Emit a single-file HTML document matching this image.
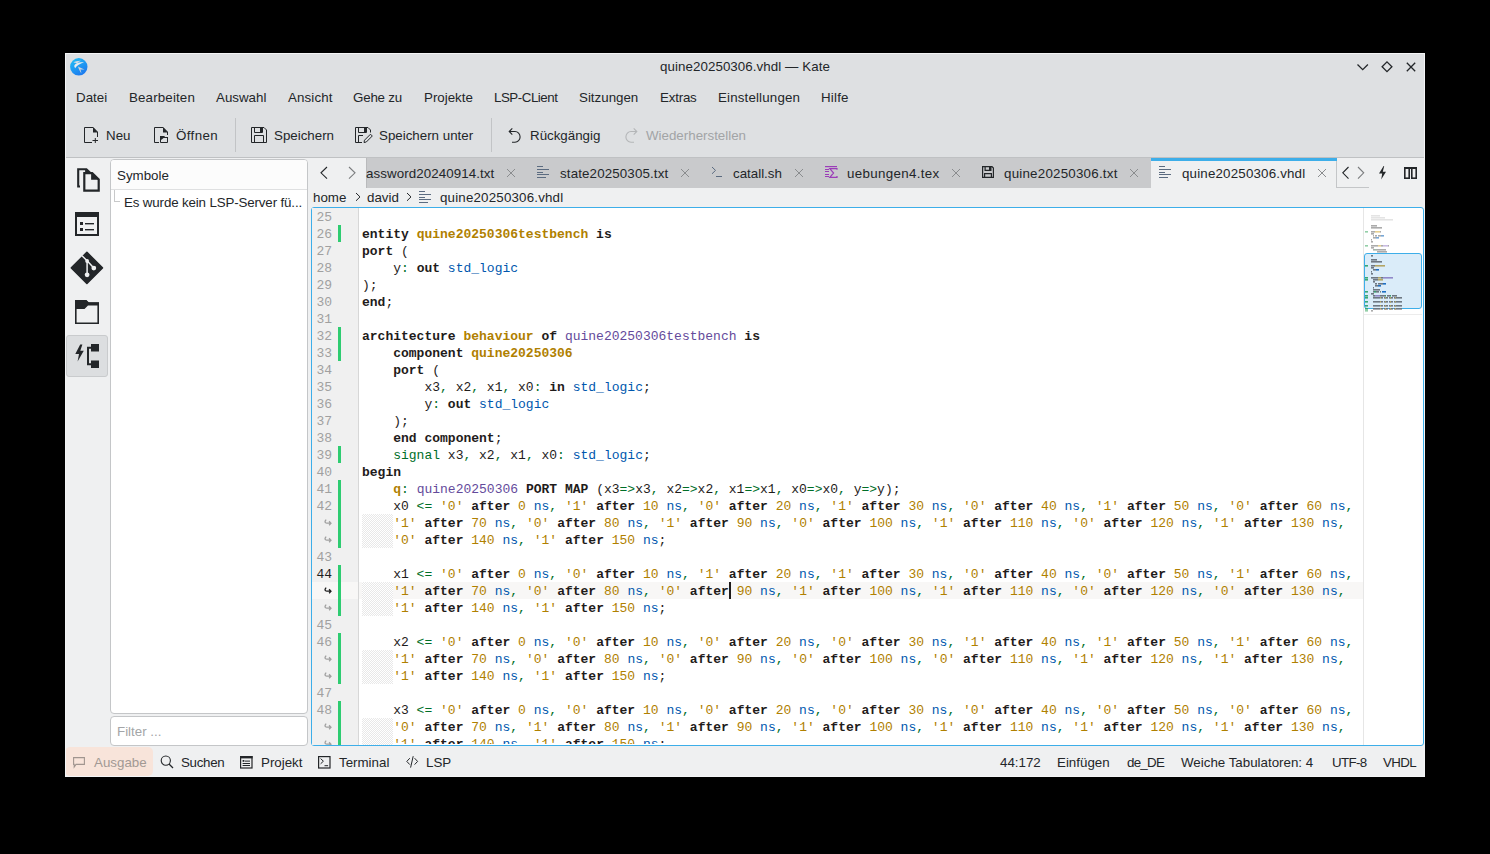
<!DOCTYPE html><html><head><meta charset="utf-8"><title>Kate</title><style>
html,body{margin:0;padding:0;background:#000;width:1490px;height:854px;overflow:hidden}
.r{position:absolute}
.t{position:absolute;font-family:'Liberation Sans', sans-serif;font-size:13.333px;line-height:16px;white-space:pre}
.code{position:absolute;left:362px;top:208px;width:1001px;height:536px;overflow:hidden;font-family:'Liberation Mono', monospace;font-size:13px;line-height:17px;color:#1f1c1b}
.row{height:17px;white-space:pre;position:relative}
.row span{position:relative;top:1px}
.k{font-weight:bold}
.ln{position:absolute;left:300px;width:32px;text-align:right;font-family:'Liberation Mono', monospace;font-size:13px;line-height:17px;padding-top:1px}
.hatch{background-color:#fff;background-image:repeating-conic-gradient(#e8e8e8 0 25%,#fff 0 50%);background-size:2px 2px}
.g{color:#b08000}
.gb{color:#b08000;font-weight:bold}
.b{color:#0057ae}
.o{color:#006e28}
.p{color:#644a9b}
svg{position:absolute;overflow:visible}
</style></head><body>
<div class="r" style="left:65px;top:53px;width:1360px;height:724px;background:#eff0f1;"></div>
<div class="r" style="left:65px;top:53px;width:1360px;height:104px;background:#dee0e2;"></div>
<div class="r" style="left:65px;top:157px;width:1360px;height:1px;background:#bfc1c3;"></div>
<div class="t" style="left:660px;top:59px;color:#232629;letter-spacing:0.07px;">quine20250306.vhdl — Kate</div>
<div class="t" style="left:76px;top:90px;color:#232629;">Datei</div>
<div class="t" style="left:129px;top:90px;color:#232629;letter-spacing:0.15px;">Bearbeiten</div>
<div class="t" style="left:216px;top:90px;color:#232629;">Auswahl</div>
<div class="t" style="left:288px;top:90px;color:#232629;letter-spacing:0.12px;">Ansicht</div>
<div class="t" style="left:353px;top:90px;color:#232629;letter-spacing:-0.2px;">Gehe zu</div>
<div class="t" style="left:424px;top:90px;color:#232629;">Projekte</div>
<div class="t" style="left:494px;top:90px;color:#232629;letter-spacing:-0.47px;">LSP-CLient</div>
<div class="t" style="left:579px;top:90px;color:#232629;">Sitzungen</div>
<div class="t" style="left:660px;top:90px;color:#232629;letter-spacing:-0.2px;">Extras</div>
<div class="t" style="left:718px;top:90px;color:#232629;letter-spacing:0.16px;">Einstellungen</div>
<div class="t" style="left:821px;top:90px;color:#232629;letter-spacing:0.2px;">Hilfe</div>
<div class="t" style="left:106px;top:128px;color:#232629;">Neu</div>
<div class="t" style="left:176px;top:128px;color:#232629;letter-spacing:0.38px;">Öffnen</div>
<div class="t" style="left:274px;top:128px;color:#232629;">Speichern</div>
<div class="t" style="left:379px;top:128px;color:#232629;">Speichern unter</div>
<div class="t" style="left:530px;top:128px;color:#232629;">Rückgängig</div>
<div class="t" style="left:646px;top:128px;color:#a2a4a6;">Wiederherstellen</div>
<div class="r" style="left:235px;top:118px;width:1px;height:34px;background:#c2c4c6;"></div>
<div class="r" style="left:491px;top:118px;width:1px;height:34px;background:#c2c4c6;"></div>
<div class="r" style="left:66px;top:335px;width:42px;height:42px;background:#dcdee0;border:1px solid #c9cbcd;border-radius:3px;box-sizing:border-box"></div>
<div class="r" style="left:110px;top:159px;width:198px;height:555px;background:#fff;border:1px solid #c4c6c8;border-radius:4px;box-sizing:border-box;overflow:hidden"><div style="position:absolute;left:0;top:0;width:196px;height:29px;background:#fcfcfc;border-bottom:1px solid #dfe0e1"></div></div>
<div class="t" style="left:117px;top:168px;color:#232629;">Symbole</div>
<div class="r" style="left:114px;top:190px;width:1px;height:12px;background:#c8c9ca;"></div>
<div class="r" style="left:114px;top:201px;width:6px;height:1px;background:#c8c9ca;"></div>
<div class="t" style="left:124px;top:195px;color:#232629;letter-spacing:-0.14px;">Es wurde kein LSP-Server fü...</div>
<div class="r" style="left:110px;top:716px;width:198px;height:30px;background:#fff;border:1px solid #c4c6c8;border-radius:4px;box-sizing:border-box"></div>
<div class="t" style="left:117px;top:724px;color:#a3a5a7;">Filter ...</div>
<div class="r" style="left:366px;top:158px;width:785px;height:30px;background:#c9cacc;"></div>
<div class="r" style="left:366px;top:158px;width:1px;height:30px;background:#b9babc;"></div>
<div class="r" style="left:1151px;top:158px;width:186px;height:30px;background:#eff0f1;"></div>
<div class="r" style="left:1151px;top:158px;width:186px;height:3px;background:#3daee9;"></div>
<div class="r" style="left:1336px;top:161px;width:1px;height:27px;background:#c4c6c8;"></div>
<div class="r" style="left:1337px;top:187px;width:32px;height:1px;background:#c4c6c8;"></div>
<div class="t" style="left:366px;top:166px;color:#232629;letter-spacing:0.08px;">assword20240914.txt</div>
<div class="t" style="left:560px;top:166px;color:#232629;letter-spacing:0.14px;">state20250305.txt</div>
<div class="t" style="left:733px;top:166px;color:#232629;">catall.sh</div>
<div class="t" style="left:847px;top:166px;color:#232629;letter-spacing:0.33px;">uebungen4.tex</div>
<div class="t" style="left:1004px;top:166px;color:#232629;letter-spacing:0.23px;">quine20250306.txt</div>
<div class="t" style="left:1182px;top:166px;color:#232629;letter-spacing:0.18px;">quine20250306.vhdl</div>
<div class="t" style="left:313px;top:190px;color:#232629;">home</div>
<div class="t" style="left:367px;top:190px;color:#232629;">david</div>
<div class="t" style="left:440px;top:190px;color:#232629;letter-spacing:0.18px;">quine20250306.vhdl</div>
<div class="r" style="left:311px;top:207px;width:1113px;height:539px;background:#fff;border:1px solid #3daee9;border-radius:3px;box-sizing:border-box;overflow:hidden"></div>
<div class="r" style="left:312px;top:208px;width:46px;height:537px;background:#f0f0f0;"></div>
<div class="r" style="left:358px;top:208px;width:1px;height:537px;background:#d7d7d7;"></div>
<div class="r" style="left:1363px;top:208px;width:1px;height:537px;background:#e6e6e6;"></div>
<div style="position:absolute;left:0;top:0;width:1490px;height:854px;clip-path:inset(208px 127px 109px 312px round 2px 0 0 2px)">
<div class="ln" style="top:208px;color:#a0a0a0">25</div>
<div class="r" style="left:338px;top:225px;width:3px;height:17px;background:#2ecc71;"></div>
<div class="ln" style="top:225px;color:#a0a0a0">26</div>
<div class="ln" style="top:242px;color:#a0a0a0">27</div>
<div class="ln" style="top:259px;color:#a0a0a0">28</div>
<div class="ln" style="top:276px;color:#a0a0a0">29</div>
<div class="ln" style="top:293px;color:#a0a0a0">30</div>
<div class="ln" style="top:310px;color:#a0a0a0">31</div>
<div class="r" style="left:338px;top:327px;width:3px;height:17px;background:#2ecc71;"></div>
<div class="ln" style="top:327px;color:#a0a0a0">32</div>
<div class="r" style="left:338px;top:344px;width:3px;height:17px;background:#2ecc71;"></div>
<div class="ln" style="top:344px;color:#a0a0a0">33</div>
<div class="ln" style="top:361px;color:#a0a0a0">34</div>
<div class="ln" style="top:378px;color:#a0a0a0">35</div>
<div class="ln" style="top:395px;color:#a0a0a0">36</div>
<div class="ln" style="top:412px;color:#a0a0a0">37</div>
<div class="ln" style="top:429px;color:#a0a0a0">38</div>
<div class="r" style="left:338px;top:446px;width:3px;height:17px;background:#2ecc71;"></div>
<div class="ln" style="top:446px;color:#a0a0a0">39</div>
<div class="ln" style="top:463px;color:#a0a0a0">40</div>
<div class="r" style="left:338px;top:480px;width:3px;height:17px;background:#2ecc71;"></div>
<div class="ln" style="top:480px;color:#a0a0a0">41</div>
<div class="r" style="left:338px;top:497px;width:3px;height:17px;background:#2ecc71;"></div>
<div class="ln" style="top:497px;color:#a0a0a0">42</div>
<div class="r hatch" style="left:362px;top:514px;width:31px;height:17px;background-position:0 -514px"></div>
<div class="r" style="left:338px;top:514px;width:3px;height:17px;background:#2ecc71;"></div>
<svg style="left:324px;top:519px" width="8" height="8" viewBox="0 0 8 8"><path d="M2.2 0.6 Q0.4 2.4 1.4 3.6 Q1.9 4.2 3 4.2 H6.8 M5.1 2.2 L7 4.2 L5.1 6.2" fill="none" stroke="#a0a0a0" stroke-width="1.25"/></svg>
<div class="r hatch" style="left:362px;top:531px;width:31px;height:17px;background-position:0 -531px"></div>
<div class="r" style="left:338px;top:531px;width:3px;height:17px;background:#2ecc71;"></div>
<svg style="left:324px;top:536px" width="8" height="8" viewBox="0 0 8 8"><path d="M2.2 0.6 Q0.4 2.4 1.4 3.6 Q1.9 4.2 3 4.2 H6.8 M5.1 2.2 L7 4.2 L5.1 6.2" fill="none" stroke="#a0a0a0" stroke-width="1.25"/></svg>
<div class="ln" style="top:548px;color:#a0a0a0">43</div>
<div class="r" style="left:338px;top:565px;width:3px;height:17px;background:#2ecc71;"></div>
<div class="ln" style="top:565px;color:#1e1e1e">44</div>
<div class="r" style="left:312px;top:582px;width:46px;height:17px;background:#f8f7f6;"></div>
<div class="r" style="left:359px;top:582px;width:1004px;height:17px;background:#f8f7f6;"></div>
<div class="r hatch" style="left:362px;top:582px;width:31px;height:17px;background-position:0 -582px"></div>
<div class="r" style="left:338px;top:582px;width:3px;height:17px;background:#2ecc71;"></div>
<svg style="left:324px;top:587px" width="8" height="8" viewBox="0 0 8 8"><path d="M2.2 0.6 Q0.4 2.4 1.4 3.6 Q1.9 4.2 3 4.2 H6.8 M5.1 2.2 L7 4.2 L5.1 6.2" fill="none" stroke="#1e1e1e" stroke-width="1.25"/></svg>
<div class="r hatch" style="left:362px;top:599px;width:31px;height:17px;background-position:0 -599px"></div>
<div class="r" style="left:338px;top:599px;width:3px;height:17px;background:#2ecc71;"></div>
<svg style="left:324px;top:604px" width="8" height="8" viewBox="0 0 8 8"><path d="M2.2 0.6 Q0.4 2.4 1.4 3.6 Q1.9 4.2 3 4.2 H6.8 M5.1 2.2 L7 4.2 L5.1 6.2" fill="none" stroke="#a0a0a0" stroke-width="1.25"/></svg>
<div class="ln" style="top:616px;color:#a0a0a0">45</div>
<div class="r" style="left:338px;top:633px;width:3px;height:17px;background:#2ecc71;"></div>
<div class="ln" style="top:633px;color:#a0a0a0">46</div>
<div class="r hatch" style="left:362px;top:650px;width:31px;height:17px;background-position:0 -650px"></div>
<div class="r" style="left:338px;top:650px;width:3px;height:17px;background:#2ecc71;"></div>
<svg style="left:324px;top:655px" width="8" height="8" viewBox="0 0 8 8"><path d="M2.2 0.6 Q0.4 2.4 1.4 3.6 Q1.9 4.2 3 4.2 H6.8 M5.1 2.2 L7 4.2 L5.1 6.2" fill="none" stroke="#a0a0a0" stroke-width="1.25"/></svg>
<div class="r hatch" style="left:362px;top:667px;width:31px;height:17px;background-position:0 -667px"></div>
<div class="r" style="left:338px;top:667px;width:3px;height:17px;background:#2ecc71;"></div>
<svg style="left:324px;top:672px" width="8" height="8" viewBox="0 0 8 8"><path d="M2.2 0.6 Q0.4 2.4 1.4 3.6 Q1.9 4.2 3 4.2 H6.8 M5.1 2.2 L7 4.2 L5.1 6.2" fill="none" stroke="#a0a0a0" stroke-width="1.25"/></svg>
<div class="ln" style="top:684px;color:#a0a0a0">47</div>
<div class="r" style="left:338px;top:701px;width:3px;height:17px;background:#2ecc71;"></div>
<div class="ln" style="top:701px;color:#a0a0a0">48</div>
<div class="r hatch" style="left:362px;top:718px;width:31px;height:17px;background-position:0 -718px"></div>
<div class="r" style="left:338px;top:718px;width:3px;height:17px;background:#2ecc71;"></div>
<svg style="left:324px;top:723px" width="8" height="8" viewBox="0 0 8 8"><path d="M2.2 0.6 Q0.4 2.4 1.4 3.6 Q1.9 4.2 3 4.2 H6.8 M5.1 2.2 L7 4.2 L5.1 6.2" fill="none" stroke="#a0a0a0" stroke-width="1.25"/></svg>
<div class="r hatch" style="left:362px;top:735px;width:31px;height:17px;background-position:0 -735px"></div>
<div class="r" style="left:338px;top:735px;width:3px;height:17px;background:#2ecc71;"></div>
<svg style="left:324px;top:740px" width="8" height="8" viewBox="0 0 8 8"><path d="M2.2 0.6 Q0.4 2.4 1.4 3.6 Q1.9 4.2 3 4.2 H6.8 M5.1 2.2 L7 4.2 L5.1 6.2" fill="none" stroke="#a0a0a0" stroke-width="1.25"/></svg>
<div class="code"><div class="row"></div><div class="row"><span class="k">entity</span><span> </span><span class="gb">quine20250306testbench</span><span> </span><span class="k">is</span></div><div class="row"><span class="k">port</span><span> (</span></div><div class="row"><span>    y</span><span class="o">:</span><span> </span><span class="k">out</span><span> </span><span class="b">std_logic</span></div><div class="row"><span>);</span></div><div class="row"><span class="k">end</span><span>;</span></div><div class="row"></div><div class="row"><span class="k">architecture</span><span> </span><span class="gb">behaviour</span><span> </span><span class="k">of</span><span> </span><span class="p">quine20250306testbench</span><span> </span><span class="k">is</span></div><div class="row"><span>    </span><span class="k">component</span><span> </span><span class="gb">quine20250306</span></div><div class="row"><span>    </span><span class="k">port</span><span> (</span></div><div class="row"><span>        x3</span><span class="o">,</span><span> x2</span><span class="o">,</span><span> x1</span><span class="o">,</span><span> x0</span><span class="o">:</span><span> </span><span class="k">in</span><span> </span><span class="b">std_logic</span><span>;</span></div><div class="row"><span>        y</span><span class="o">:</span><span> </span><span class="k">out</span><span> </span><span class="b">std_logic</span></div><div class="row"><span>    );</span></div><div class="row"><span>    </span><span class="k">end</span><span> </span><span class="k">component</span><span>;</span></div><div class="row"><span>    </span><span class="o">signal</span><span> x3</span><span class="o">,</span><span> x2</span><span class="o">,</span><span> x1</span><span class="o">,</span><span> x0</span><span class="o">:</span><span> </span><span class="b">std_logic</span><span>;</span></div><div class="row"><span class="k">begin</span></div><div class="row"><span>    </span><span class="gb">q</span><span class="o">:</span><span> </span><span class="p">quine20250306</span><span> </span><span class="k">PORT</span><span> </span><span class="k">MAP</span><span> (x3</span><span class="o">=&gt;</span><span>x3</span><span class="o">,</span><span> x2</span><span class="o">=&gt;</span><span>x2</span><span class="o">,</span><span> x1</span><span class="o">=&gt;</span><span>x1</span><span class="o">,</span><span> x0</span><span class="o">=&gt;</span><span>x0</span><span class="o">,</span><span> y</span><span class="o">=&gt;</span><span>y);</span></div><div class="row"><span>    x0 </span><span class="o">&lt;=</span><span> </span><span class="g">&#x27;0&#x27;</span><span> </span><span class="k">after</span><span> </span><span class="g">0</span><span> </span><span class="b">ns</span><span class="o">,</span><span> </span><span class="g">&#x27;1&#x27;</span><span> </span><span class="k">after</span><span> </span><span class="g">10</span><span> </span><span class="b">ns</span><span class="o">,</span><span> </span><span class="g">&#x27;0&#x27;</span><span> </span><span class="k">after</span><span> </span><span class="g">20</span><span> </span><span class="b">ns</span><span class="o">,</span><span> </span><span class="g">&#x27;1&#x27;</span><span> </span><span class="k">after</span><span> </span><span class="g">30</span><span> </span><span class="b">ns</span><span class="o">,</span><span> </span><span class="g">&#x27;0&#x27;</span><span> </span><span class="k">after</span><span> </span><span class="g">40</span><span> </span><span class="b">ns</span><span class="o">,</span><span> </span><span class="g">&#x27;1&#x27;</span><span> </span><span class="k">after</span><span> </span><span class="g">50</span><span> </span><span class="b">ns</span><span class="o">,</span><span> </span><span class="g">&#x27;0&#x27;</span><span> </span><span class="k">after</span><span> </span><span class="g">60</span><span> </span><span class="b">ns</span><span class="o">,</span></div><div class="row"><span>    </span><span class="g">&#x27;1&#x27;</span><span> </span><span class="k">after</span><span> </span><span class="g">70</span><span> </span><span class="b">ns</span><span class="o">,</span><span> </span><span class="g">&#x27;0&#x27;</span><span> </span><span class="k">after</span><span> </span><span class="g">80</span><span> </span><span class="b">ns</span><span class="o">,</span><span> </span><span class="g">&#x27;1&#x27;</span><span> </span><span class="k">after</span><span> </span><span class="g">90</span><span> </span><span class="b">ns</span><span class="o">,</span><span> </span><span class="g">&#x27;0&#x27;</span><span> </span><span class="k">after</span><span> </span><span class="g">100</span><span> </span><span class="b">ns</span><span class="o">,</span><span> </span><span class="g">&#x27;1&#x27;</span><span> </span><span class="k">after</span><span> </span><span class="g">110</span><span> </span><span class="b">ns</span><span class="o">,</span><span> </span><span class="g">&#x27;0&#x27;</span><span> </span><span class="k">after</span><span> </span><span class="g">120</span><span> </span><span class="b">ns</span><span class="o">,</span><span> </span><span class="g">&#x27;1&#x27;</span><span> </span><span class="k">after</span><span> </span><span class="g">130</span><span> </span><span class="b">ns</span><span class="o">,</span></div><div class="row"><span>    </span><span class="g">&#x27;0&#x27;</span><span> </span><span class="k">after</span><span> </span><span class="g">140</span><span> </span><span class="b">ns</span><span class="o">,</span><span> </span><span class="g">&#x27;1&#x27;</span><span> </span><span class="k">after</span><span> </span><span class="g">150</span><span> </span><span class="b">ns</span><span>;</span></div><div class="row"></div><div class="row"><span>    x1 </span><span class="o">&lt;=</span><span> </span><span class="g">&#x27;0&#x27;</span><span> </span><span class="k">after</span><span> </span><span class="g">0</span><span> </span><span class="b">ns</span><span class="o">,</span><span> </span><span class="g">&#x27;0&#x27;</span><span> </span><span class="k">after</span><span> </span><span class="g">10</span><span> </span><span class="b">ns</span><span class="o">,</span><span> </span><span class="g">&#x27;1&#x27;</span><span> </span><span class="k">after</span><span> </span><span class="g">20</span><span> </span><span class="b">ns</span><span class="o">,</span><span> </span><span class="g">&#x27;1&#x27;</span><span> </span><span class="k">after</span><span> </span><span class="g">30</span><span> </span><span class="b">ns</span><span class="o">,</span><span> </span><span class="g">&#x27;0&#x27;</span><span> </span><span class="k">after</span><span> </span><span class="g">40</span><span> </span><span class="b">ns</span><span class="o">,</span><span> </span><span class="g">&#x27;0&#x27;</span><span> </span><span class="k">after</span><span> </span><span class="g">50</span><span> </span><span class="b">ns</span><span class="o">,</span><span> </span><span class="g">&#x27;1&#x27;</span><span> </span><span class="k">after</span><span> </span><span class="g">60</span><span> </span><span class="b">ns</span><span class="o">,</span></div><div class="row"><span>    </span><span class="g">&#x27;1&#x27;</span><span> </span><span class="k">after</span><span> </span><span class="g">70</span><span> </span><span class="b">ns</span><span class="o">,</span><span> </span><span class="g">&#x27;0&#x27;</span><span> </span><span class="k">after</span><span> </span><span class="g">80</span><span> </span><span class="b">ns</span><span class="o">,</span><span> </span><span class="g">&#x27;0&#x27;</span><span> </span><span class="k">after</span><span> </span><span class="g">90</span><span> </span><span class="b">ns</span><span class="o">,</span><span> </span><span class="g">&#x27;1&#x27;</span><span> </span><span class="k">after</span><span> </span><span class="g">100</span><span> </span><span class="b">ns</span><span class="o">,</span><span> </span><span class="g">&#x27;1&#x27;</span><span> </span><span class="k">after</span><span> </span><span class="g">110</span><span> </span><span class="b">ns</span><span class="o">,</span><span> </span><span class="g">&#x27;0&#x27;</span><span> </span><span class="k">after</span><span> </span><span class="g">120</span><span> </span><span class="b">ns</span><span class="o">,</span><span> </span><span class="g">&#x27;0&#x27;</span><span> </span><span class="k">after</span><span> </span><span class="g">130</span><span> </span><span class="b">ns</span><span class="o">,</span></div><div class="row"><span>    </span><span class="g">&#x27;1&#x27;</span><span> </span><span class="k">after</span><span> </span><span class="g">140</span><span> </span><span class="b">ns</span><span class="o">,</span><span> </span><span class="g">&#x27;1&#x27;</span><span> </span><span class="k">after</span><span> </span><span class="g">150</span><span> </span><span class="b">ns</span><span>;</span></div><div class="row"></div><div class="row"><span>    x2 </span><span class="o">&lt;=</span><span> </span><span class="g">&#x27;0&#x27;</span><span> </span><span class="k">after</span><span> </span><span class="g">0</span><span> </span><span class="b">ns</span><span class="o">,</span><span> </span><span class="g">&#x27;0&#x27;</span><span> </span><span class="k">after</span><span> </span><span class="g">10</span><span> </span><span class="b">ns</span><span class="o">,</span><span> </span><span class="g">&#x27;0&#x27;</span><span> </span><span class="k">after</span><span> </span><span class="g">20</span><span> </span><span class="b">ns</span><span class="o">,</span><span> </span><span class="g">&#x27;0&#x27;</span><span> </span><span class="k">after</span><span> </span><span class="g">30</span><span> </span><span class="b">ns</span><span class="o">,</span><span> </span><span class="g">&#x27;1&#x27;</span><span> </span><span class="k">after</span><span> </span><span class="g">40</span><span> </span><span class="b">ns</span><span class="o">,</span><span> </span><span class="g">&#x27;1&#x27;</span><span> </span><span class="k">after</span><span> </span><span class="g">50</span><span> </span><span class="b">ns</span><span class="o">,</span><span> </span><span class="g">&#x27;1&#x27;</span><span> </span><span class="k">after</span><span> </span><span class="g">60</span><span> </span><span class="b">ns</span><span class="o">,</span></div><div class="row"><span>    </span><span class="g">&#x27;1&#x27;</span><span> </span><span class="k">after</span><span> </span><span class="g">70</span><span> </span><span class="b">ns</span><span class="o">,</span><span> </span><span class="g">&#x27;0&#x27;</span><span> </span><span class="k">after</span><span> </span><span class="g">80</span><span> </span><span class="b">ns</span><span class="o">,</span><span> </span><span class="g">&#x27;0&#x27;</span><span> </span><span class="k">after</span><span> </span><span class="g">90</span><span> </span><span class="b">ns</span><span class="o">,</span><span> </span><span class="g">&#x27;0&#x27;</span><span> </span><span class="k">after</span><span> </span><span class="g">100</span><span> </span><span class="b">ns</span><span class="o">,</span><span> </span><span class="g">&#x27;0&#x27;</span><span> </span><span class="k">after</span><span> </span><span class="g">110</span><span> </span><span class="b">ns</span><span class="o">,</span><span> </span><span class="g">&#x27;1&#x27;</span><span> </span><span class="k">after</span><span> </span><span class="g">120</span><span> </span><span class="b">ns</span><span class="o">,</span><span> </span><span class="g">&#x27;1&#x27;</span><span> </span><span class="k">after</span><span> </span><span class="g">130</span><span> </span><span class="b">ns</span><span class="o">,</span></div><div class="row"><span>    </span><span class="g">&#x27;1&#x27;</span><span> </span><span class="k">after</span><span> </span><span class="g">140</span><span> </span><span class="b">ns</span><span class="o">,</span><span> </span><span class="g">&#x27;1&#x27;</span><span> </span><span class="k">after</span><span> </span><span class="g">150</span><span> </span><span class="b">ns</span><span>;</span></div><div class="row"></div><div class="row"><span>    x3 </span><span class="o">&lt;=</span><span> </span><span class="g">&#x27;0&#x27;</span><span> </span><span class="k">after</span><span> </span><span class="g">0</span><span> </span><span class="b">ns</span><span class="o">,</span><span> </span><span class="g">&#x27;0&#x27;</span><span> </span><span class="k">after</span><span> </span><span class="g">10</span><span> </span><span class="b">ns</span><span class="o">,</span><span> </span><span class="g">&#x27;0&#x27;</span><span> </span><span class="k">after</span><span> </span><span class="g">20</span><span> </span><span class="b">ns</span><span class="o">,</span><span> </span><span class="g">&#x27;0&#x27;</span><span> </span><span class="k">after</span><span> </span><span class="g">30</span><span> </span><span class="b">ns</span><span class="o">,</span><span> </span><span class="g">&#x27;0&#x27;</span><span> </span><span class="k">after</span><span> </span><span class="g">40</span><span> </span><span class="b">ns</span><span class="o">,</span><span> </span><span class="g">&#x27;0&#x27;</span><span> </span><span class="k">after</span><span> </span><span class="g">50</span><span> </span><span class="b">ns</span><span class="o">,</span><span> </span><span class="g">&#x27;0&#x27;</span><span> </span><span class="k">after</span><span> </span><span class="g">60</span><span> </span><span class="b">ns</span><span class="o">,</span></div><div class="row"><span>    </span><span class="g">&#x27;0&#x27;</span><span> </span><span class="k">after</span><span> </span><span class="g">70</span><span> </span><span class="b">ns</span><span class="o">,</span><span> </span><span class="g">&#x27;1&#x27;</span><span> </span><span class="k">after</span><span> </span><span class="g">80</span><span> </span><span class="b">ns</span><span class="o">,</span><span> </span><span class="g">&#x27;1&#x27;</span><span> </span><span class="k">after</span><span> </span><span class="g">90</span><span> </span><span class="b">ns</span><span class="o">,</span><span> </span><span class="g">&#x27;1&#x27;</span><span> </span><span class="k">after</span><span> </span><span class="g">100</span><span> </span><span class="b">ns</span><span class="o">,</span><span> </span><span class="g">&#x27;1&#x27;</span><span> </span><span class="k">after</span><span> </span><span class="g">110</span><span> </span><span class="b">ns</span><span class="o">,</span><span> </span><span class="g">&#x27;1&#x27;</span><span> </span><span class="k">after</span><span> </span><span class="g">120</span><span> </span><span class="b">ns</span><span class="o">,</span><span> </span><span class="g">&#x27;1&#x27;</span><span> </span><span class="k">after</span><span> </span><span class="g">130</span><span> </span><span class="b">ns</span><span class="o">,</span></div><div class="row"><span>    </span><span class="g">&#x27;1&#x27;</span><span> </span><span class="k">after</span><span> </span><span class="g">140</span><span> </span><span class="b">ns</span><span class="o">,</span><span> </span><span class="g">&#x27;1&#x27;</span><span> </span><span class="k">after</span><span> </span><span class="g">150</span><span> </span><span class="b">ns</span><span>;</span></div></div>
</div>
<div class="r" style="left:729px;top:582px;width:2px;height:17px;background:#1f1c1b;"></div>
<div class="r" style="left:1364px;top:253px;width:58px;height:56px;background:#daecf9;border:1.5px solid #3daee9;border-radius:3px;box-sizing:border-box"></div>
<div class="r" style="left:1364px;top:314px;width:58px;height:1px;background:#ececec;"></div>
<svg style="left:0;top:0" width="1490" height="854" viewBox="0 0 1490 854"><rect x="1371" y="215" width="9" height="1.6" fill="#e4e4e4"/><rect x="1371" y="217" width="14" height="1.6" fill="#e4e4e4"/><rect x="1371" y="219" width="22" height="1.6" fill="#e4e4e4"/><rect x="1371" y="225" width="6" height="1.6" fill="#ababab"/><rect x="1371" y="227" width="11" height="1.6" fill="#ababab"/><rect x="1365" y="231" width="3" height="1.6" fill="#93cfa8"/><rect x="1371" y="231" width="4" height="1.6" fill="#ababab"/><rect x="1375" y="231" width="5" height="1.6" fill="#e6d092"/><rect x="1380" y="231" width="1" height="1.6" fill="#ababab"/><rect x="1371" y="233" width="3" height="1.6" fill="#ababab"/><rect x="1373" y="235" width="1" height="1.6" fill="#ababab"/><rect x="1375" y="235" width="2" height="1.6" fill="#ababab"/><rect x="1378" y="235" width="3" height="1.6" fill="#ababab"/><rect x="1381" y="235" width="3" height="1.6" fill="#78a7d6"/><rect x="1373" y="237" width="3" height="1.6" fill="#ababab"/><rect x="1376" y="237" width="3" height="1.6" fill="#78a7d6"/><rect x="1371" y="239" width="1" height="1.6" fill="#ababab"/><rect x="1371" y="241" width="2" height="1.6" fill="#ababab"/><rect x="1365" y="245" width="3" height="1.6" fill="#93cfa8"/><rect x="1371" y="245" width="7" height="1.6" fill="#ababab"/><rect x="1378" y="245" width="3" height="1.6" fill="#e6d092"/><rect x="1381" y="245" width="2" height="1.6" fill="#ababab"/><rect x="1383" y="245" width="5" height="1.6" fill="#c9bbe2"/><rect x="1388" y="245" width="1" height="1.6" fill="#ababab"/><rect x="1371" y="247" width="3" height="1.6" fill="#ababab"/><rect x="1373" y="249" width="2" height="1.6" fill="#ababab"/><rect x="1375" y="249" width="1" height="1.6" fill="#8fcba8"/><rect x="1376" y="249" width="10" height="1.6" fill="#ababab"/><rect x="1377" y="251" width="10" height="1.6" fill="#ababab"/><rect x="1371" y="255" width="2" height="1.6" fill="#6e7782"/><rect x="1371" y="259" width="6" height="1.6" fill="#6e7782"/><rect x="1371" y="261" width="11" height="1.6" fill="#6e7782"/><rect x="1365" y="265" width="3" height="1.6" fill="#3aa776"/><rect x="1371" y="265" width="4" height="1.6" fill="#6e7782"/><rect x="1375" y="265" width="10" height="1.6" fill="#b3a565"/><rect x="1371" y="267" width="3" height="1.6" fill="#6e7782"/><rect x="1373" y="269" width="3" height="1.6" fill="#6e7782"/><rect x="1376" y="269" width="3" height="1.6" fill="#1d6fc4"/><rect x="1371" y="271" width="1" height="1.6" fill="#6e7782"/><rect x="1371" y="273" width="2" height="1.6" fill="#6e7782"/><rect x="1365" y="277" width="3" height="1.6" fill="#3aa776"/><rect x="1371" y="277" width="7" height="1.6" fill="#6e7782"/><rect x="1378" y="277" width="3" height="1.6" fill="#b3a565"/><rect x="1381" y="277" width="2" height="1.6" fill="#6e7782"/><rect x="1383" y="277" width="10" height="1.6" fill="#9189c9"/><rect x="1365" y="279" width="3" height="1.6" fill="#3aa776"/><rect x="1373" y="279" width="5" height="1.6" fill="#6e7782"/><rect x="1378" y="279" width="5" height="1.6" fill="#b3a565"/><rect x="1373" y="281" width="2" height="1.6" fill="#6e7782"/><rect x="1375" y="283" width="2" height="1.6" fill="#6e7782"/><rect x="1378" y="283" width="5" height="1.6" fill="#6e7782"/><rect x="1383" y="283" width="3" height="1.6" fill="#1d6fc4"/><rect x="1375" y="285" width="3" height="1.6" fill="#6e7782"/><rect x="1378" y="285" width="3" height="1.6" fill="#1d6fc4"/><rect x="1373" y="287" width="1" height="1.6" fill="#6e7782"/><rect x="1373" y="289" width="7" height="1.6" fill="#6e7782"/><rect x="1365" y="291" width="3" height="1.6" fill="#3aa776"/><rect x="1373" y="291" width="1" height="1.6" fill="#6e7782"/><rect x="1374" y="291" width="2" height="1.6" fill="#3a9a70"/><rect x="1376" y="291" width="3" height="1.6" fill="#6e7782"/><rect x="1380" y="291" width="1" height="1.6" fill="#6e7782"/><rect x="1382" y="291" width="4" height="1.6" fill="#1d6fc4"/><rect x="1371" y="293" width="3" height="1.6" fill="#6e7782"/><rect x="1365" y="295" width="3" height="1.6" fill="#3aa776"/><rect x="1373" y="295" width="2" height="1.6" fill="#6e7782"/><rect x="1375" y="295" width="5" height="1.6" fill="#9189c9"/><rect x="1380" y="295" width="5" height="1.6" fill="#6e7782"/><rect x="1385" y="295" width="1" height="1.6" fill="#3a9a70"/><rect x="1387" y="295" width="3" height="1.6" fill="#6e7782"/><rect x="1390" y="295" width="1" height="1.6" fill="#3a9a70"/><rect x="1392" y="295" width="5" height="1.6" fill="#6e7782"/><rect x="1365" y="297" width="3" height="1.6" fill="#3aa776"/><rect x="1373" y="297" width="7" height="1.6" fill="#6e7782"/><rect x="1380" y="297" width="1" height="1.6" fill="#b3a565"/><rect x="1381" y="297" width="2" height="1.6" fill="#6e7782"/><rect x="1384" y="297" width="4" height="1.6" fill="#6e7782"/><rect x="1385" y="297" width="1" height="1.6" fill="#b3a565"/><rect x="1389" y="297" width="4" height="1.6" fill="#6e7782"/><rect x="1390" y="297" width="1" height="1.6" fill="#b3a565"/><rect x="1394" y="297" width="8" height="1.6" fill="#6e7782"/><rect x="1395" y="297" width="1" height="1.6" fill="#b3a565"/><rect x="1365" y="301" width="3" height="1.6" fill="#3aa776"/><rect x="1373" y="301" width="7" height="1.6" fill="#6e7782"/><rect x="1380" y="301" width="1" height="1.6" fill="#b3a565"/><rect x="1381" y="301" width="2" height="1.6" fill="#6e7782"/><rect x="1384" y="301" width="4" height="1.6" fill="#6e7782"/><rect x="1385" y="301" width="1" height="1.6" fill="#b3a565"/><rect x="1389" y="301" width="4" height="1.6" fill="#6e7782"/><rect x="1390" y="301" width="1" height="1.6" fill="#b3a565"/><rect x="1394" y="301" width="8" height="1.6" fill="#6e7782"/><rect x="1395" y="301" width="1" height="1.6" fill="#b3a565"/><rect x="1365" y="305" width="3" height="1.6" fill="#3aa776"/><rect x="1373" y="305" width="7" height="1.6" fill="#6e7782"/><rect x="1380" y="305" width="1" height="1.6" fill="#b3a565"/><rect x="1381" y="305" width="2" height="1.6" fill="#6e7782"/><rect x="1384" y="305" width="4" height="1.6" fill="#6e7782"/><rect x="1385" y="305" width="1" height="1.6" fill="#b3a565"/><rect x="1389" y="305" width="4" height="1.6" fill="#6e7782"/><rect x="1390" y="305" width="1" height="1.6" fill="#b3a565"/><rect x="1394" y="305" width="8" height="1.6" fill="#6e7782"/><rect x="1395" y="305" width="1" height="1.6" fill="#b3a565"/><rect x="1365" y="308" width="3" height="1.6" fill="#3aa776"/><rect x="1373" y="308" width="7" height="1.6" fill="#6e7782"/><rect x="1380" y="308" width="1" height="1.6" fill="#b3a565"/><rect x="1381" y="308" width="2" height="1.6" fill="#6e7782"/><rect x="1384" y="308" width="4" height="1.6" fill="#6e7782"/><rect x="1385" y="308" width="1" height="1.6" fill="#b3a565"/><rect x="1389" y="308" width="4" height="1.6" fill="#6e7782"/><rect x="1390" y="308" width="1" height="1.6" fill="#b3a565"/><rect x="1394" y="308" width="8" height="1.6" fill="#6e7782"/><rect x="1395" y="308" width="1" height="1.6" fill="#b3a565"/><rect x="1365" y="310" width="3" height="1.6" fill="#93cfa8"/><rect x="1371" y="310" width="2" height="1.6" fill="#ababab"/></svg>
<div class="r" style="left:65px;top:747px;width:88px;height:29px;background:#f8e4da;border-radius:5px"></div>
<div class="t" style="left:94px;top:755px;color:#a29994;">Ausgabe</div>
<div class="t" style="left:181px;top:755px;color:#232629;letter-spacing:-0.3px;">Suchen</div>
<div class="t" style="left:261px;top:755px;color:#232629;">Projekt</div>
<div class="t" style="left:339px;top:755px;color:#232629;">Terminal</div>
<div class="t" style="left:426px;top:755px;color:#232629;">LSP</div>
<div class="t" style="left:1000px;top:755px;color:#232629;">44:172</div>
<div class="t" style="left:1057px;top:755px;color:#232629;">Einfügen</div>
<div class="t" style="left:1127px;top:755px;color:#232629;letter-spacing:-0.74px;">de_DE</div>
<div class="t" style="left:1181px;top:755px;color:#232629;">Weiche Tabulatoren: 4</div>
<div class="t" style="left:1332px;top:755px;color:#232629;letter-spacing:-0.64px;">UTF-8</div>
<div class="t" style="left:1383px;top:755px;color:#232629;letter-spacing:-0.6px;">VHDL</div>
<div class="r" style="left:65px;top:53px;width:1360px;height:1px;background:#f4f5f6;"></div>
<div class="r" style="left:65px;top:53px;width:1px;height:724px;background:#f4f5f6;"></div>
<div class="r" style="left:1424px;top:53px;width:1px;height:724px;background:#f4f5f6;"></div>
<div class="r" style="left:65px;top:776px;width:1360px;height:1px;background:#f4f5f6;"></div>
<svg style="left:70px;top:58px;" width="18" height="18" viewBox="0 0 18 18"><defs><linearGradient id="kg" x1="0.2" y1="0" x2="0.8" y2="1"><stop offset="0" stop-color="#22bdf6"/><stop offset="1" stop-color="#1c74ee"/></linearGradient></defs><circle cx="8.8" cy="8.8" r="8.7" fill="url(#kg)"/><path d="M3.4 4.6 C5 3.4 8 2.6 10.8 2.8 C9 3.6 7.8 4.6 7.2 5.6 C6 5 4.8 4.7 3.4 4.6 Z" fill="#d9dde3"/><path d="M4.3 8.6 C4 6.8 6.5 5.2 9 4.6 C10.8 4.1 12.6 3.9 14 4 C11.5 5.2 8.5 6.8 6.8 8.2 C6 8.9 5.5 9.6 5.6 10.2 C4.9 9.8 4.4 9.2 4.3 8.6 Z" fill="#e9ecf0"/><path d="M8 8.6 C9.8 9.4 12.2 10.6 14.6 11.6 C12.5 11.6 11.2 11.4 10.4 11.2 C10.8 12.6 11.2 14 11.4 15.4 C10.2 14 9 11.8 8 8.6 Z" fill="#cfd3d9"/></svg>
<svg style="left:1356px;top:62px;" width="14" height="10" viewBox="0 0 14 10"><path d="M1.5 2.5 L6.7 7.7 L11.9 2.5" fill="none" stroke="#232629" stroke-width="1.3"/></svg>
<svg style="left:1380px;top:60px;" width="14" height="14" viewBox="0 0 14 14"><path d="M7 1.9 L11.9 6.8 L7 11.7 L2.1 6.8 Z" fill="none" stroke="#232629" stroke-width="1.3"/></svg>
<svg style="left:1405px;top:61px;" width="12" height="12" viewBox="0 0 12 12"><path d="M1.8 1.8 L10.2 10.2 M10.2 1.8 L1.8 10.2" fill="none" stroke="#232629" stroke-width="1.3"/></svg>
<svg style="left:83px;top:127px;" width="16" height="16" viewBox="0 0 16 16"><path d="M9 15.5 H1.5 V0.5 H10 L14.5 5 V10" fill="none" stroke="#232629"/><path d="M10 0 V5.5 H15 Z" fill="#232629"/><path d="M9.5 13.5 H15 M12.3 11 V16" stroke="#232629"/></svg>
<svg style="left:153px;top:127px;" width="16" height="16" viewBox="0 0 16 16"><path d="M6 15.5 H1.5 V0.5 H10 L14.5 5 V8" fill="none" stroke="#232629"/><path d="M10 0 V5.5 H15 Z" fill="#232629"/><path d="M7.5 9.5 H11 L12 10.5 H14.5 V15.5 H7.5 Z" fill="none" stroke="#232629"/><path d="M7 9 H11 L12 10 H15 V11 H10.5 L8.5 12.8 H7 Z" fill="#232629"/></svg>
<svg style="left:251px;top:127px;" width="16" height="16" viewBox="0 0 16 16"><path d="M0.5 0.5 H13 L15.5 3 V15.5 H0.5 Z" fill="none" stroke="#232629"/><path d="M3.5 0.5 V5.5 H11.5 V0.5" fill="none" stroke="#232629"/><rect x="9" y="1" width="2" height="4" fill="#232629"/><path d="M3.5 15.5 V8.5 H12.5 V15.5" fill="none" stroke="#232629"/></svg>
<svg style="left:355px;top:127px;" width="18" height="16" viewBox="0 0 18 16"><path d="M7 15.5 H0.5 V0.5 H13 L15.5 3 V5.5" fill="none" stroke="#232629"/><path d="M3.5 0.5 V5.5 H11.5 V0.5" fill="none" stroke="#232629"/><rect x="9" y="1" width="2" height="4" fill="#232629"/><path d="M3.5 15.5 V8.5 H8" fill="none" stroke="#232629"/><path d="M9 15.5 L9.5 13.2 L15.5 7.2 L17.3 9 L11.3 15 Z" fill="none" stroke="#232629" stroke-width="1"/></svg>
<svg style="left:508px;top:127px;" width="14" height="16" viewBox="0 0 14 16"><path d="M1.5 4.5 H7 A5 5.3 0 0 1 7 15.3 H4" fill="none" stroke="#232629" stroke-width="1.1"/><path d="M4.3 1.4 L1.2 4.5 L4.3 7.6" fill="none" stroke="#232629" stroke-width="1.1"/></svg>
<svg style="left:624px;top:127px;" width="14" height="16" viewBox="0 0 14 16"><path d="M12.5 4.5 H7 A5 5.3 0 0 0 7 15.3 H10" fill="none" stroke="#b4b6b8" stroke-width="1.1"/><path d="M9.7 1.4 L12.8 4.5 L9.7 7.6" fill="none" stroke="#b4b6b8" stroke-width="1.1"/></svg>
<svg style="left:76px;top:167px;" width="24" height="26" viewBox="0 0 24 26"><path d="M4 19.5 H2.2 V2.2 H10.4 L14.4 6" fill="none" stroke="#232629" stroke-width="2.1"/><path d="M9.1 2 L14.4 6.1 H9.1 Z" fill="#232629"/><path d="M8.3 6.1 H16.2 L22.7 12.4 V23.6 H8.3 Z" fill="none" stroke="#232629" stroke-width="2.2" stroke-linejoin="miter"/><path d="M15.1 6 L22.8 12.8 H15.1 Z" fill="#232629"/></svg>
<svg style="left:75px;top:212px;" width="24" height="24" viewBox="0 0 24 24"><rect x="1" y="1" width="22" height="22" fill="none" stroke="#232629" stroke-width="2"/><rect x="0" y="0" width="24" height="5" fill="#232629"/><rect x="5" y="10" width="3" height="3" fill="#232629"/><rect x="10" y="11" width="9" height="1.4" fill="#232629"/><rect x="5" y="16" width="3" height="3" fill="#232629"/><rect x="10" y="17" width="9" height="1.4" fill="#232629"/></svg>
<svg style="left:70px;top:251px;" width="34" height="34" viewBox="0 0 34 34"><path d="M16.9 1.4 L32.4 16.9 L16.9 32.4 L1.4 16.9 Z" fill="#232629" stroke="#232629" stroke-linejoin="round" stroke-width="1.6"/><path d="M12 4.8 L17.1 9.8 V23.8 M17.1 9.8 L23.8 17.1" fill="none" stroke="#eff0f1" stroke-width="1.5"/><circle cx="17.1" cy="10" r="1.9" fill="#eff0f1"/><circle cx="23.8" cy="17.1" r="2.4" fill="#eff0f1"/><circle cx="17.1" cy="23.8" r="2.4" fill="#eff0f1"/></svg>
<svg style="left:75px;top:300px;" width="24" height="24" viewBox="0 0 24 24"><path d="M0.8 23.2 V0.8 H11 L13.5 3 H23.2 V23.2 Z" fill="none" stroke="#232629" stroke-width="1.6"/><path d="M0 0 H11 L13.5 2.5 H24 V5.5 H13 L9.5 9 H0 Z" fill="#232629"/></svg>
<svg style="left:75px;top:344px;" width="25" height="25" viewBox="0 0 25 25"><path d="M5.2 0.5 L0.3 10 H4 L2.6 17.5 L8.8 6.8 H5.3 L7.4 0.5 Z" fill="#232629"/><rect x="16" y="0" width="8" height="7.5" fill="#232629"/><rect x="16" y="16.5" width="8" height="7.5" fill="#232629"/><path d="M16 3.7 H13 V20.2 H16" fill="none" stroke="#232629" stroke-width="2"/></svg>
<svg style="left:319px;top:166px;" width="10" height="14" viewBox="0 0 10 14"><path d="M8 1 L2 6.8 L8 12.6" fill="none" stroke="#232629" stroke-width="1.1"/></svg>
<svg style="left:347px;top:166px;" width="10" height="14" viewBox="0 0 10 14"><path d="M2 1 L8 6.8 L2 12.6" fill="none" stroke="#7a7c7e" stroke-width="1.1"/></svg>
<svg style="left:537px;top:166px;" width="13" height="13" viewBox="0 0 13 13"><g fill="#5b6b80"><rect x="0" y="0" width="6" height="1"/><rect x="0" y="3" width="12" height="1"/><rect x="0" y="6" width="6" height="1"/><rect x="0" y="8" width="12" height="1"/><rect x="0" y="11" width="9" height="1"/></g></svg>
<svg style="left:1159px;top:166px;" width="13" height="13" viewBox="0 0 13 13"><g fill="#5b6b80"><rect x="0" y="0" width="6" height="1"/><rect x="0" y="3" width="12" height="1"/><rect x="0" y="6" width="6" height="1"/><rect x="0" y="8" width="12" height="1"/><rect x="0" y="11" width="9" height="1"/></g></svg>
<svg style="left:419px;top:191px;" width="13" height="13" viewBox="0 0 13 13"><g fill="#5b6b80"><rect x="0" y="0" width="6" height="1"/><rect x="0" y="3" width="12" height="1"/><rect x="0" y="6" width="6" height="1"/><rect x="0" y="8" width="12" height="1"/><rect x="0" y="11" width="9" height="1"/></g></svg>
<svg style="left:711px;top:166px;" width="12" height="12" viewBox="0 0 12 12"><path d="M1 1 L4.5 4.4 L1 7.8" fill="none" stroke="#5b6b80" stroke-width="1"/><rect x="5" y="10" width="6" height="1" fill="#5b6b80"/></svg>
<svg style="left:825px;top:165px;" width="13" height="14" viewBox="0 0 13 14"><g fill="#9b3db8"><rect x="0" y="1" width="12" height="1.2"/><rect x="0" y="4" width="4" height="1"/><rect x="0" y="6" width="4" height="1"/><rect x="0" y="9" width="4" height="1"/><rect x="0" y="11" width="4" height="1"/></g><path d="M12 4.8 V3.6 H4.8 L8.6 8 L4.8 12.4 H12 V11" fill="none" stroke="#9b3db8" stroke-width="1.2"/></svg>
<svg style="left:982px;top:166px;" width="12" height="12" viewBox="0 0 12 12"><path d="M0.6 0.6 H10 L11.4 2 V11.4 H0.6 Z" fill="none" stroke="#232629" stroke-width="1.2"/><path d="M3.1 0.6 V4.4 H8.9 V0.6" fill="none" stroke="#232629" stroke-width="1.2"/><rect x="7" y="1" width="2" height="3" fill="#232629"/><path d="M2.6 11.4 V7.6 H9.4 V11.4" fill="none" stroke="#232629" stroke-width="1.2"/></svg>
<svg style="left:506px;top:168px;" width="10" height="10" viewBox="0 0 10 10"><path d="M1 1 L9 9 M9 1 L1 9" fill="none" stroke="#8a8c8e" stroke-width="1"/></svg>
<svg style="left:680px;top:168px;" width="10" height="10" viewBox="0 0 10 10"><path d="M1 1 L9 9 M9 1 L1 9" fill="none" stroke="#8a8c8e" stroke-width="1"/></svg>
<svg style="left:794px;top:168px;" width="10" height="10" viewBox="0 0 10 10"><path d="M1 1 L9 9 M9 1 L1 9" fill="none" stroke="#8a8c8e" stroke-width="1"/></svg>
<svg style="left:951px;top:168px;" width="10" height="10" viewBox="0 0 10 10"><path d="M1 1 L9 9 M9 1 L1 9" fill="none" stroke="#8a8c8e" stroke-width="1"/></svg>
<svg style="left:1129px;top:168px;" width="10" height="10" viewBox="0 0 10 10"><path d="M1 1 L9 9 M9 1 L1 9" fill="none" stroke="#8a8c8e" stroke-width="1"/></svg>
<svg style="left:1317px;top:168px;" width="10" height="10" viewBox="0 0 10 10"><path d="M1 1 L9 9 M9 1 L1 9" fill="none" stroke="#8a8c8e" stroke-width="1"/></svg>
<svg style="left:1341px;top:166px;" width="10" height="14" viewBox="0 0 10 14"><path d="M7.5 1 L1.8 6.8 L7.5 12.6" fill="none" stroke="#232629" stroke-width="1.1"/></svg>
<svg style="left:1356px;top:166px;" width="10" height="14" viewBox="0 0 10 14"><path d="M2 1 L7.7 6.8 L2 12.6" fill="none" stroke="#7a7c7e" stroke-width="1.1"/></svg>
<svg style="left:1379px;top:166px;" width="8" height="14" viewBox="0 0 8 14"><path d="M4.6 0 L0 7.5 H3.2 L2.2 13.5 L7 5.8 H3.8 L5.2 0 Z" fill="#232629"/></svg>
<svg style="left:1404px;top:167px;" width="13" height="12" viewBox="0 0 13 12"><rect x="0.8" y="0.8" width="4.4" height="10.4" fill="none" stroke="#232629" stroke-width="1.6"/><rect x="7.8" y="0.8" width="4.4" height="10.4" fill="none" stroke="#232629" stroke-width="1.6"/><rect x="0" y="0" width="13" height="2" fill="#232629"/></svg>
<svg style="left:355px;top:192px;" width="7" height="10" viewBox="0 0 7 10"><path d="M1 1 L5 4.9 L1 8.8" fill="none" stroke="#232629" stroke-width="1"/></svg>
<svg style="left:406px;top:192px;" width="7" height="10" viewBox="0 0 7 10"><path d="M1 1 L5 4.9 L1 8.8" fill="none" stroke="#232629" stroke-width="1"/></svg>
<svg style="left:73px;top:757px;" width="13" height="12" viewBox="0 0 13 12"><path d="M0.6 0.6 H11.4 V7.4 H3 L1.2 10 V7.4 H0.6 Z" fill="none" stroke="#a0958f" stroke-width="1.1"/></svg>
<svg style="left:160px;top:755px;" width="14" height="14" viewBox="0 0 14 14"><circle cx="5.8" cy="5.6" r="4.6" fill="none" stroke="#232629" stroke-width="1.1"/><path d="M9 9 L13 13" stroke="#232629" stroke-width="1.2"/></svg>
<svg style="left:240px;top:756px;" width="13" height="13" viewBox="0 0 13 13"><rect x="0.6" y="0.6" width="11.4" height="11.4" fill="none" stroke="#232629" stroke-width="1.2"/><rect x="0" y="0" width="12.6" height="2.4" fill="#232629"/><rect x="2.6" y="4" width="1.8" height="1.8" fill="#232629"/><rect x="5" y="4.6" width="5" height="1" fill="#232629"/><rect x="2.6" y="7" width="7.4" height="1" fill="#232629"/><rect x="2.6" y="9" width="7.4" height="1" fill="#232629"/></svg>
<svg style="left:318px;top:756px;" width="13" height="13" viewBox="0 0 13 13"><rect x="0.6" y="0.6" width="11.4" height="11.4" fill="none" stroke="#232629" stroke-width="1.2"/><path d="M2.6 2.6 L5.4 5.2 L2.6 7.8" fill="none" stroke="#232629" stroke-width="1"/><rect x="6.5" y="9.2" width="3.6" height="1" fill="#232629"/></svg>
<svg style="left:406px;top:756px;" width="13" height="13" viewBox="0 0 13 13"><path d="M3.8 2.2 L0.8 5.4 L3.8 8.6 M8.6 2.2 L11.6 5.4 L8.6 8.6 M7.2 0.2 L4.6 11.6" fill="none" stroke="#232629" stroke-width="1"/></svg>
</body></html>
